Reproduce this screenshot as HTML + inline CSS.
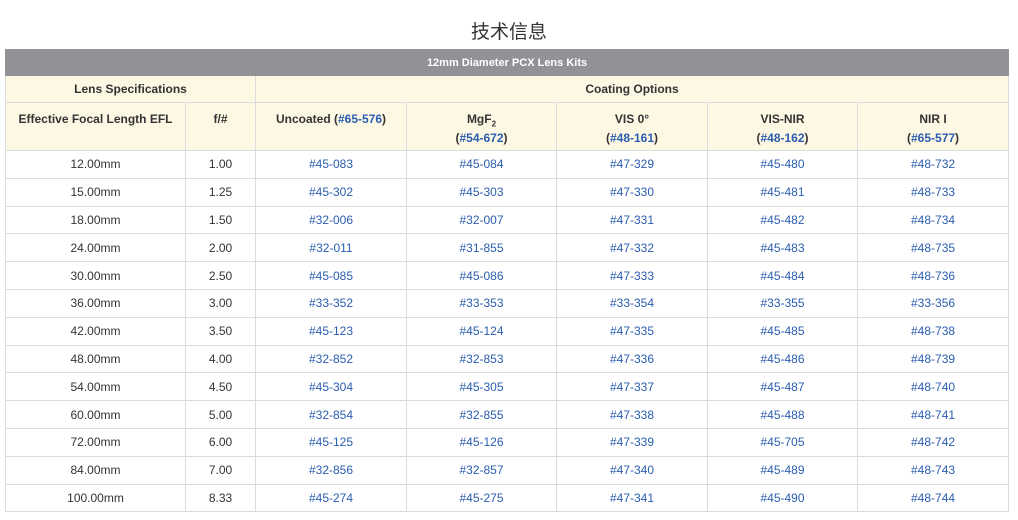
<!DOCTYPE html>
<html><head><meta charset="utf-8"><style>
body{margin:0;background:#fff;width:1018px;height:520px;overflow:hidden;font-family:"Liberation Sans","Noto Sans CJK SC",sans-serif;}
h1{position:absolute;top:17px;left:0;width:1018px;text-align:center;margin:0;font-weight:normal;font-size:19px;color:#333;font-family:"Liberation Sans","Noto Sans CJK SC",sans-serif;}
table{position:absolute;left:5px;top:49px;width:1003px;border-collapse:collapse;table-layout:fixed;font-size:12px;color:#333;}
td,th{border:1px solid #dcdcdc;text-align:center;padding:0;}
th{background:#fdf8e4;font-weight:bold;color:#333;}
.g th{background:#919296;color:#fff;height:25px;font-size:11px;border-color:#919296;}
.h1 th{height:26px;}
.h2 th{height:40px;vertical-align:top;padding-top:7px;line-height:19px;}
td{height:26.8px;}
a{color:#2a5db0;text-decoration:none;}
th a{color:#2a5db0;}
sub{font-size:8px;line-height:0;}
</style></head><body>
<h1>技术信息</h1>
<table>
<colgroup><col style="width:180px"><col style="width:70px"><col style="width:151px"><col style="width:150px"><col style="width:151px"><col style="width:150px"><col style="width:151px"></colgroup>
<tr class="g"><th colspan="7">12mm Diameter PCX Lens Kits</th></tr>
<tr class="h1"><th colspan="2">Lens Specifications</th><th colspan="5">Coating Options</th></tr>
<tr class="h2"><th>Effective Focal Length EFL</th><th>f/#</th><th>Uncoated (<a>#65-576</a>)</th><th>MgF<sub>2</sub><br>(<a>#54-672</a>)</th><th>VIS 0°<br>(<a>#48-161</a>)</th><th>VIS-NIR<br>(<a>#48-162</a>)</th><th>NIR I<br>(<a>#65-577</a>)</th></tr>
<tr><td>12.00mm</td><td>1.00</td><td><a>#45-083</a></td><td><a>#45-084</a></td><td><a>#47-329</a></td><td><a>#45-480</a></td><td><a>#48-732</a></td></tr>
<tr><td>15.00mm</td><td>1.25</td><td><a>#45-302</a></td><td><a>#45-303</a></td><td><a>#47-330</a></td><td><a>#45-481</a></td><td><a>#48-733</a></td></tr>
<tr><td>18.00mm</td><td>1.50</td><td><a>#32-006</a></td><td><a>#32-007</a></td><td><a>#47-331</a></td><td><a>#45-482</a></td><td><a>#48-734</a></td></tr>
<tr><td>24.00mm</td><td>2.00</td><td><a>#32-011</a></td><td><a>#31-855</a></td><td><a>#47-332</a></td><td><a>#45-483</a></td><td><a>#48-735</a></td></tr>
<tr><td>30.00mm</td><td>2.50</td><td><a>#45-085</a></td><td><a>#45-086</a></td><td><a>#47-333</a></td><td><a>#45-484</a></td><td><a>#48-736</a></td></tr>
<tr><td>36.00mm</td><td>3.00</td><td><a>#33-352</a></td><td><a>#33-353</a></td><td><a>#33-354</a></td><td><a>#33-355</a></td><td><a>#33-356</a></td></tr>
<tr><td>42.00mm</td><td>3.50</td><td><a>#45-123</a></td><td><a>#45-124</a></td><td><a>#47-335</a></td><td><a>#45-485</a></td><td><a>#48-738</a></td></tr>
<tr><td>48.00mm</td><td>4.00</td><td><a>#32-852</a></td><td><a>#32-853</a></td><td><a>#47-336</a></td><td><a>#45-486</a></td><td><a>#48-739</a></td></tr>
<tr><td>54.00mm</td><td>4.50</td><td><a>#45-304</a></td><td><a>#45-305</a></td><td><a>#47-337</a></td><td><a>#45-487</a></td><td><a>#48-740</a></td></tr>
<tr><td>60.00mm</td><td>5.00</td><td><a>#32-854</a></td><td><a>#32-855</a></td><td><a>#47-338</a></td><td><a>#45-488</a></td><td><a>#48-741</a></td></tr>
<tr><td>72.00mm</td><td>6.00</td><td><a>#45-125</a></td><td><a>#45-126</a></td><td><a>#47-339</a></td><td><a>#45-705</a></td><td><a>#48-742</a></td></tr>
<tr><td>84.00mm</td><td>7.00</td><td><a>#32-856</a></td><td><a>#32-857</a></td><td><a>#47-340</a></td><td><a>#45-489</a></td><td><a>#48-743</a></td></tr>
<tr><td>100.00mm</td><td>8.33</td><td><a>#45-274</a></td><td><a>#45-275</a></td><td><a>#47-341</a></td><td><a>#45-490</a></td><td><a>#48-744</a></td></tr>
</table>
</body></html>
